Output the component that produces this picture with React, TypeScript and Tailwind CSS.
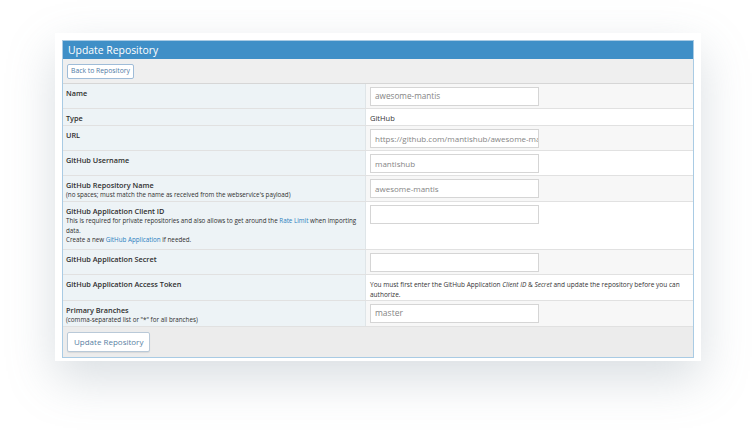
import React from "react";

type Row = {
  label: string;
  sub?: React.ReactNode;
  value: React.ReactNode;
  h: string;
  alt?: boolean;
};

function Input({ value, className = "" }: { value?: string; className?: string }) {
  return (
    <div
      className={
        "w-[169px] h-[19px] bg-white border border-[#d5d5d5] flex items-center px-[4px] overflow-hidden whitespace-nowrap text-[#858585] " +
        className
      }
    >
      {value}
    </div>
  );
}

export default function App() {
  const rows: Row[] = [
    { label: "Name", value: <Input value="awesome-mantis" className="text-[8.2px]" />, h: "h-[25px]", alt: true },
    { label: "Type", value: <div className="pt-[1px] text-[7.5px] leading-[10px] text-[#333]">GitHub</div>, h: "h-[17px]" },
    {
      label: "URL",
      value: <Input value="https://github.com/mantishub/awesome-mantis" className="text-[8px]" />,
      h: "h-[25px]",
      alt: true,
    },
    { label: "GitHub Username", value: <Input value="mantishub" className="text-[8px]" />, h: "h-[25px]" },
    {
      label: "GitHub Repository Name",
      sub: "(no spaces; must match the name as received from the webservice's payload)",
      value: <Input value="awesome-mantis" className="text-[8px]" />,
      h: "h-[26px]",
      alt: true,
    },
    {
      label: "GitHub Application Client ID",
      sub: (
        <>
          This is required for private repositories and also allows to get around the{" "}
          <span className="text-[#2a7fc0]">Rate Limit</span> when importing data.
          <br />
          Create a new <span className="text-[#2a7fc0]">GitHub Application</span> if needed.
        </>
      ),
      value: <Input />,
      h: "h-[48px]",
    },
    { label: "GitHub Application Secret", value: <Input />, h: "h-[25px]", alt: true },
    {
      label: "GitHub Application Access Token",
      value: (
        <div className="pt-[2px] text-[6.5px] leading-[10px] text-[#333] pr-[6px]">
          You must first enter the GitHub Application <i>Client ID</i> &amp; <i>Secret</i> and update the
          repository before you can authorize.
        </div>
      ),
      h: "h-[26px]",
    },
    {
      label: "Primary Branches",
      sub: '(comma-separated list or "*" for all branches)',
      value: <Input value="master" className="text-[8.5px]" />,
      h: "h-[26px]",
      alt: true,
    },
  ];

  return (
    <div
      className="w-[756px] h-[435px] bg-white overflow-hidden"
      style={{ fontFamily: '"Open Sans", "Liberation Sans", sans-serif' }}
    >
      <div className="ml-[55px] mt-[33px] w-[646px] bg-white px-[7px] pt-[7px] pb-[3px] shadow-[0_18px_45px_rgba(120,135,150,0.28)]">
        <div className="border border-[#a9cbe4] bg-white">
          <div className="h-[18px] bg-[#3f8fc7] flex items-center pl-[5px] text-white text-[10.4px] leading-none">
            Update Repository
          </div>
          <div className="h-[25px] bg-[#efefef] border-b border-[#d6d6d6] flex items-center pl-[4px]">
            <div className="h-[15px] px-[3px] flex items-center border border-[#9fbcd8] rounded-[2px] bg-white text-[6.8px] text-[#4f7ba5]">
              Back to Repository
            </div>
          </div>
          {rows.map((r) => (
            <div key={r.label} className={"flex border-b border-[#e1e1e1] " + r.h}>
              <div className="w-[303px] shrink-0 bg-[#edf3f6] border-r border-[#dfe5e8] pl-[3px] pt-[4px] text-[#2f2f2f]">
                <div className="text-[7.3px] font-semibold leading-[10px]">{r.label}</div>
                {r.sub && <div className="text-[6.25px] leading-[9.5px] pr-[6px]">{r.sub}</div>}
              </div>
              <div className={"flex-1 pl-[4px] pt-[3px] " + (r.alt ? "bg-[#f7f7f7]" : "bg-white")}>{r.value}</div>
            </div>
          ))}
          <div className="h-[30px] bg-[#ececec] flex items-center pl-[4px]">
            <div className="h-[20px] px-[6px] flex items-center border border-[#b9c9d8] rounded-[2px] bg-white text-[8px] text-[#5a7fa3] shadow-[0_1px_1px_rgba(0,0,0,0.08)]">
              Update Repository
            </div>
          </div>
        </div>
      </div>
    </div>
  );
}
